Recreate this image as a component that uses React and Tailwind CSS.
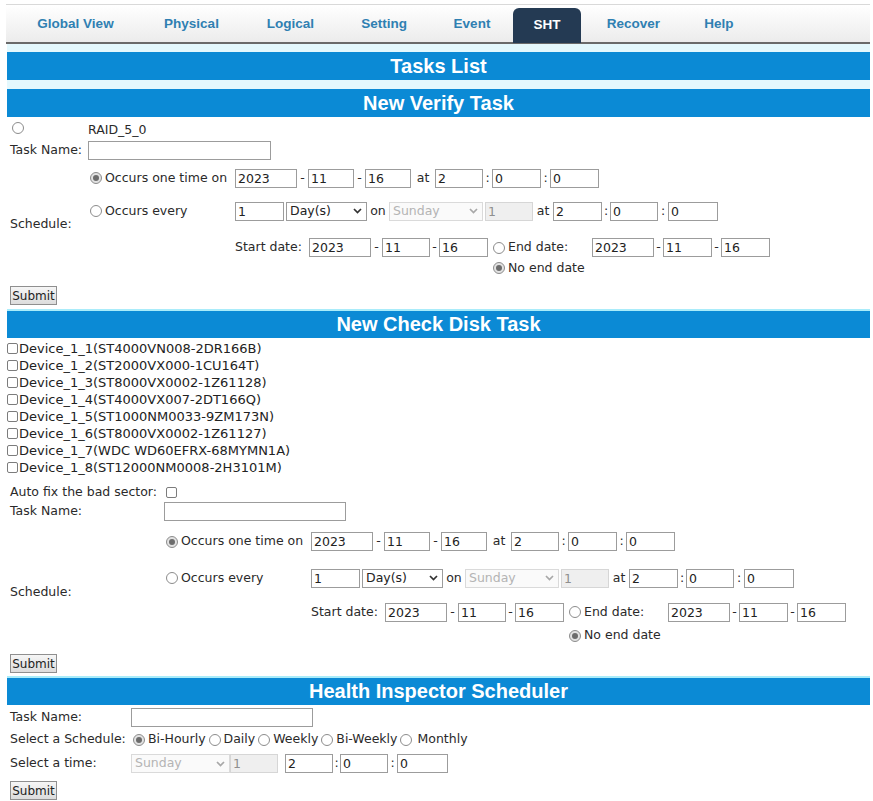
import React from 'react'

const tabs = [
  ['Global View', 'w-[127px]'],
  ['Physical', 'w-[105px]'],
  ['Logical', 'w-[93px]'],
  ['Setting', 'w-[94px]'],
  ['Event', 'w-[82px]'],
  ['SHT', 'w-[68px]', true],
  ['Recover', 'w-[105px]'],
  ['Help', 'w-[66px]'],
]

const devices = [
  'Device_1_1(ST4000VN008-2DR166B)',
  'Device_1_2(ST2000VX000-1CU164T)',
  'Device_1_3(ST8000VX0002-1Z61128)',
  'Device_1_4(ST4000VX007-2DT166Q)',
  'Device_1_5(ST1000NM0033-9ZM173N)',
  'Device_1_6(ST8000VX0002-1Z61127)',
  'Device_1_7(WDC WD60EFRX-68MYMN1A)',
  'Device_1_8(ST12000NM0008-2H3101M)',
]

const Radio = ({ checked }) => (
  <span
    className={`inline-flex w-[12px] h-[12px] shrink-0 items-center justify-center rounded-full border border-[#8c8c8c] ${
      checked ? 'bg-[#e2e2e2]' : 'bg-white'
    }`}
  >
    {checked && <span className="w-[6px] h-[6px] rounded-full bg-[#6c6c6c]" />}
  </span>
)

const Check = () => (
  <span className="inline-block w-[11px] h-[11px] shrink-0 rounded-[2px] border border-[#7c7c7c] bg-white" />
)

const Field = ({ className = '', value = '', disabled = false }) => (
  <input
    readOnly
    value={value}
    className={`h-[19px] border px-[2px] text-[12.5px] outline-none ${
      disabled ? 'border-[#d6d6d6] bg-[#efefef] text-[#8f8f8f]' : 'border-[#9c9c9c] bg-white text-[#222]'
    } ${className}`}
  />
)

const Sep = ({ children, className = 'w-[11px]' }) => (
  <span className={`text-center ${className}`}>{children}</span>
)

const Chevron = ({ color }) => (
  <svg width="9" height="6" viewBox="0 0 9 6" className="shrink-0">
    <path d="M1 1 L4.5 4.5 L8 1" fill="none" stroke={color} strokeWidth="1.7" />
  </svg>
)

const Select = ({ value, className = '', disabled = false }) => (
  <div
    className={`flex h-[19px] items-center justify-between border pl-[3px] pr-[4px] text-[12.5px] ${
      disabled ? 'border-[#dadada] bg-[#fafafa] text-[#b4b4b4]' : 'border-[#9c9c9c] bg-white text-[#222]'
    } ${className}`}
  >
    <span>{value}</span>
    <Chevron color={disabled ? '#a8a8a8' : '#333'} />
  </div>
)

const Submit = ({ className = '' }) => (
  <button
    className={`h-[19px] w-[47px] border border-[#8f8f8f] bg-gradient-to-b from-[#f6f6f6] to-[#dcdcdc] text-[12px] text-[#222] ${className}`}
  >
    Submit
  </button>
)

const Bar = ({ children, className = '' }) => (
  <div
    className={`flex items-center justify-center bg-[#0b8ad5] font-['Liberation_Sans',Arial,sans-serif] text-[20px] font-bold text-white ${className}`}
  >
    {children}
  </div>
)

const Schedule = ({ labelClass, r1, r2, r3, r4 }) => (
  <div className="flex">
    <div className={`flex items-center ${labelClass}`}>Schedule:</div>
    <div className="flex flex-col">
      <div className={`flex items-center ${r1}`}>
        <div className="flex w-[147px] items-center gap-[3px] pl-[2px]">
          <Radio checked />
          <span>Occurs one time on</span>
        </div>
        <Field className="w-[62px]" value="2023" />
        <Sep>-</Sep>
        <Field className="w-[46px]" value="11" />
        <Sep>-</Sep>
        <Field className="w-[46px]" value="16" />
        <Sep className="w-[24px]">at</Sep>
        <Field className="w-[48px]" value="2" />
        <Sep className="w-[9px]">:</Sep>
        <Field className="w-[49px]" value="0" />
        <Sep className="w-[9px]">:</Sep>
        <Field className="w-[49px]" value="0" />
      </div>
      <div className={`flex items-center ${r2}`}>
        <div className="flex w-[147px] items-center gap-[3px] pl-[2px]">
          <Radio />
          <span>Occurs every</span>
        </div>
        <Field className="w-[49px]" value="1" />
        <Select className="ml-[2px] w-[81px]" value="Day(s)" />
        <Sep className="w-[22px]">on</Sep>
        <Select className="w-[94px]" value="Sunday" disabled />
        <Field className="ml-[2px] w-[48px]" value="1" disabled />
        <Sep className="w-[20px]">at</Sep>
        <Field className="w-[49px]" value="2" />
        <Sep className="w-[8px]">:</Sep>
        <Field className="w-[48px]" value="0" />
        <Sep className="w-[10px]">:</Sep>
        <Field className="w-[50px]" value="0" />
      </div>
      <div className={`flex items-center ${r3}`}>
        <div className="w-[147px]" />
        <span className="w-[74px]">Start date:</span>
        <Field className="w-[62px]" value="2023" />
        <Sep>-</Sep>
        <Field className="w-[48px]" value="11" />
        <Sep className="w-[9px]">-</Sep>
        <Field className="w-[49px]" value="16" />
        <div className="flex w-[104px] items-center gap-[3px] pl-[5px]">
          <Radio />
          <span>End date:</span>
        </div>
        <Field className="w-[62px]" value="2023" />
        <Sep className="w-[9px]">-</Sep>
        <Field className="w-[49px]" value="11" />
        <Sep className="w-[9px]">-</Sep>
        <Field className="w-[49px]" value="16" />
      </div>
      <div className={`flex items-center ${r4}`}>
        <div className="flex items-center gap-[3px] pl-[405px]">
          <Radio checked />
          <span>No end date</span>
        </div>
      </div>
    </div>
  </div>
)

export default function App() {
  return (
    <div className="min-h-[801px] w-[873px] bg-white pt-[4px] font-['DejaVu_Sans',sans-serif] text-[12.5px] text-[#2a2a2a]">
      <nav className="ml-[6px] flex h-[40px] w-[864px] border-t border-b-2 border-t-[#d9d9d9] border-b-[#6a6a6a] bg-gradient-to-b from-white to-[#ececec] pl-[6px] font-['Liberation_Sans',Arial,sans-serif] text-[13.5px] font-bold">
        {tabs.map(([name, w, active]) =>
          active ? (
            <div
              key={name}
              className={`mt-[3px] flex h-[35px] items-center justify-center rounded-t-[6px] bg-[#243a53] text-white ${w}`}
            >
              {name}
            </div>
          ) : (
            <div key={name} className={`flex items-center justify-center pt-[2px] text-[#2f80b2] ${w}`}>
              {name}
            </div>
          )
        )}
      </nav>

      <div className="ml-[7px] flex w-[863px] flex-col gap-[9px] bg-[#e4f8fd] pt-[8px]">
        <Bar className="h-[28px]">Tasks List</Bar>
        <Bar className="h-[28px]">New Verify Task</Bar>
      </div>

      <section className="pl-[10px] pt-[4px]">
        <div className="flex h-[18px] items-center">
          <div className="w-[78px] pl-[2px]">
            <Radio />
          </div>
          <span>RAID_5_0</span>
        </div>
        <div className="flex h-[22px] items-center">
          <span className="w-[78px]">Task Name:</span>
          <Field className="w-[183px]" />
        </div>
        <Schedule
          labelClass="w-[78px] pt-[11px]"
          r1="h-[34px]"
          r2="h-[32px]"
          r3="h-[32px] pt-[9px]"
          r4="h-[18px]"
        />
        <Submit className="mt-[9px]" />
      </section>

      <Bar className="ml-[7px] mt-[3px] h-[29px] w-[863px] border-t-2 border-[#a9ecfa]">New Check Disk Task</Bar>

      <section className="pl-[10px]">
        <div className="mt-[2px] -ml-[3px] flex flex-col text-[13px] text-[#222]">
          {devices.map((d) => (
            <div key={d} className="flex h-[17px] items-center gap-[1px]">
              <Check />
              <span>{d}</span>
            </div>
          ))}
        </div>
        <div className="mt-[8px] flex h-[18px] items-center">
          <span className="w-[156px]">Auto fix the bad sector:</span>
          <Check />
        </div>
        <div className="flex h-[20px] items-center">
          <span className="w-[154px]">Task Name:</span>
          <Field className="w-[182px]" />
        </div>
        <Schedule
          labelClass="w-[154px] pt-[17px]"
          r1="h-[40px]"
          r2="h-[33px]"
          r3="h-[30px] pt-[5px]"
          r4="h-[22px]"
        />
        <Submit className="mt-[7px]" />
      </section>

      <Bar className="ml-[7px] mt-[2px] h-[29px] w-[863px] border-t-2 border-[#a9ecfa]">Health Inspector Scheduler</Bar>

      <section className="pl-[10px]">
        <div className="mt-[2px] flex h-[22px] items-center">
          <span className="w-[121px]">Task Name:</span>
          <Field className="w-[182px]" />
        </div>
        <div className="flex h-[22px] items-center">
          <span className="w-[121px] whitespace-nowrap">Select a Schedule:</span>
          <div className="ml-[2px] flex items-center gap-[3px]">
            <Radio checked />
            <span>Bi-Hourly</span>
            <Radio />
            <span>Daily</span>
            <Radio />
            <span>Weekly</span>
            <Radio />
            <span>Bi-Weekly</span>
            <Radio />
            <span className="ml-[2px]">Monthly</span>
          </div>
        </div>
        <div className="mt-[2px] flex h-[22px] items-center">
          <span className="w-[121px]">Select a time:</span>
          <Select className="w-[99px]" value="Sunday" disabled />
          <Field className="w-[48px]" value="1" disabled />
          <Field className="ml-[7px] w-[48px]" value="2" />
          <Sep className="w-[7px]">:</Sep>
          <Field className="w-[48px]" value="0" />
          <Sep className="w-[9px]">:</Sep>
          <Field className="w-[51px]" value="0" />
        </div>
        <Submit className="mt-[6px]" />
      </section>
    </div>
  )
}
